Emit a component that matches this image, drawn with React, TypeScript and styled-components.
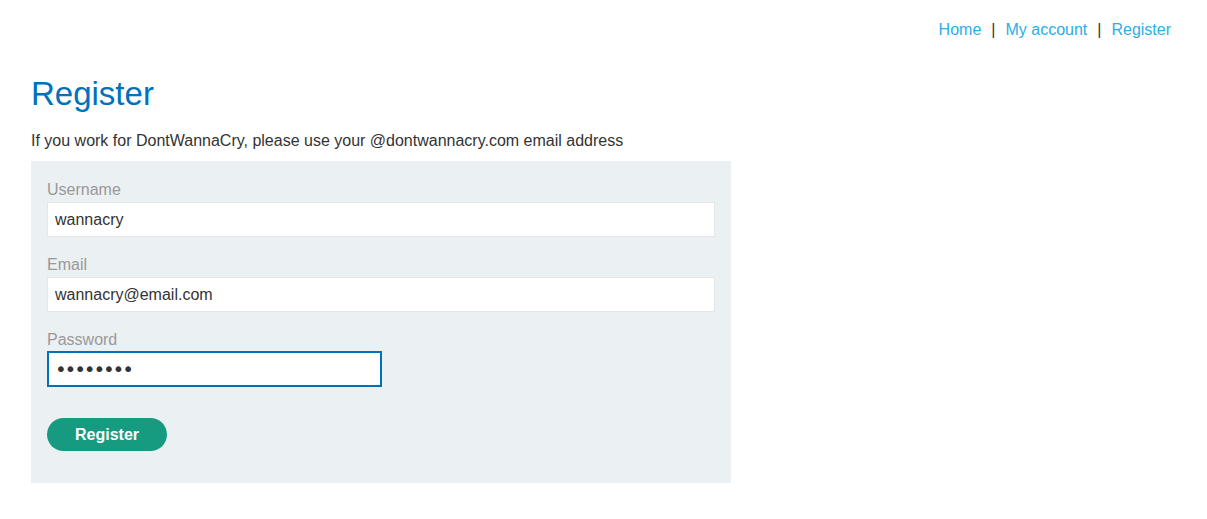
import React from "react";
import styled, { createGlobalStyle } from "styled-components";

const Global = createGlobalStyle`
  html, body { margin: 0; padding: 0; background: #fff; }
  body { font-family: "Liberation Sans", Arial, sans-serif; color: #333332; font-size: 16px; }
  * { box-sizing: border-box; }
`;

const Page = styled.div`
  display: flex;
  flex-direction: column;
  padding: 0 36px 0 31px;
`;

const Header = styled.nav`
  display: flex;
  justify-content: flex-end;
  align-items: center;
  height: 58px;
  padding-top: 2px;
  font-size: 16px;
`;

const NavLink = styled.a`
  color: #2dade6;
  text-decoration: none;
`;

const Sep = styled.span`
  color: #333332;
  margin: 0 10px;
`;

const Title = styled.h1`
  margin: 16px 0 0;
  font-size: 33px;
  font-weight: normal;
  color: #0071bc;
  line-height: 40px;
`;

const Intro = styled.p`
  margin: 17px 0 0;
  line-height: 20px;
`;

const FormBox = styled.form`
  width: 700px;
  margin-top: 10px;
  background: #ebf0f2;
  padding: 17px 16px 32px;
  display: flex;
  flex-direction: column;
`;

const Field = styled.div`
  display: flex;
  flex-direction: column;
  margin-bottom: 16px;
`;

const Label = styled.label<{ $tight?: boolean }>`
  color: #999;
  line-height: 24px;
  height: ${(p) => (p.$tight ? "23px" : "24px")};
`;

const Input = styled.input<{ $half?: boolean; $focus?: boolean }>`
  width: ${(p) => (p.$half ? "335px" : "100%")};
  height: ${(p) => (p.$focus ? "36px" : "35px")};
  border: ${(p) => (p.$focus ? "2px solid #0071bc" : "1px solid #e6e6e6")};
  background: #fff;
  padding: 0 ${(p) => (p.$focus ? "6px" : "7px")};
  font-family: ${(p) => (p.$focus ? '"DejaVu Sans", sans-serif' : '"Liberation Sans", Arial, sans-serif')};
  font-size: ${(p) => (p.$focus ? "20px" : "16px")};
  letter-spacing: ${(p) => (p.$focus ? "-2.2px" : "normal")};
  color: #333332;
  outline: none;
  border-radius: 0;
`;

const Button = styled.button`
  margin-top: 15px;
  width: 120px;
  height: 33px;
  border: none;
  border-radius: 17px;
  background: #179b80;
  color: #fff;
  font-family: "Liberation Sans", Arial, sans-serif;
  font-weight: bold;
  font-size: 16px;
  padding: 0;
  cursor: pointer;
`;

export default function App() {
  return (
    <>
      <Global />
      <Page>
        <Header>
          <NavLink href="#">Home</NavLink>
          <Sep>|</Sep>
          <NavLink href="#">My account</NavLink>
          <Sep>|</Sep>
          <NavLink href="#">Register</NavLink>
        </Header>
        <Title>Register</Title>
        <Intro>If you work for DontWannaCry, please use your @dontwannacry.com email address</Intro>
        <FormBox onSubmit={(e) => e.preventDefault()}>
          <Field>
            <Label>Username</Label>
            <Input defaultValue="wannacry" />
          </Field>
          <Field>
            <Label>Email</Label>
            <Input defaultValue="wannacry@email.com" />
          </Field>
          <Field>
            <Label $tight>Password</Label>
            <Input $half $focus type="password" defaultValue="wannacry" />
          </Field>
          <div>
            <Button type="submit">Register</Button>
          </div>
        </FormBox>
      </Page>
    </>
  );
}
